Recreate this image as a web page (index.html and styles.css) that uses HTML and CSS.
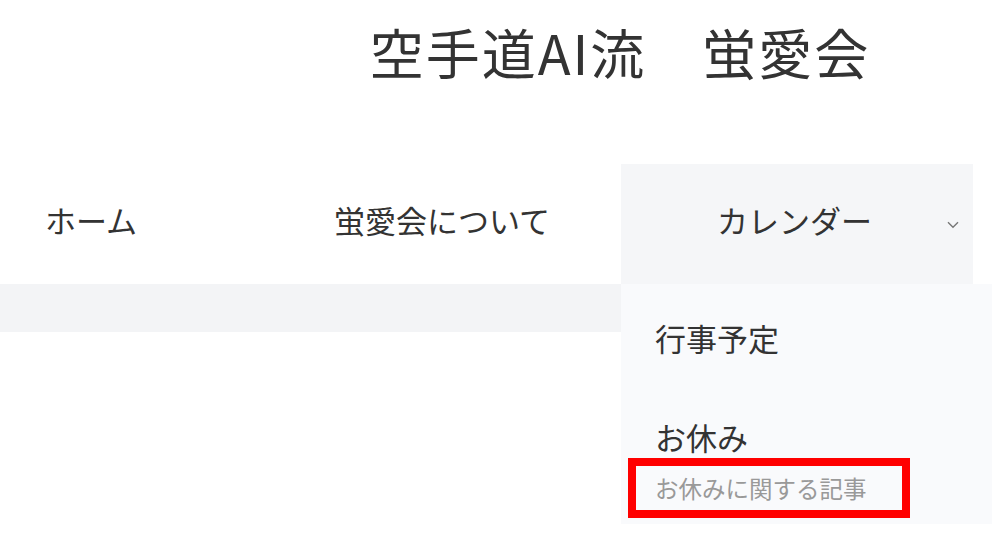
FILE: index.html
```html
<!DOCTYPE html>
<html lang="ja">
<head>
<meta charset="utf-8">
<title>空手道AI流　蛍愛会</title>
<link rel="stylesheet" href="styles.css">
</head>
<body>
<header class="site-header">
  <h1 class="site-title">空手道AI流　蛍愛会</h1>
</header>
<nav class="main-nav">
  <a class="nav-item nav-home" href="#">ホーム</a>
  <a class="nav-item nav-about" href="#">蛍愛会について</a>
  <div class="nav-item nav-calendar">
    <span class="nav-label">カレンダー</span>
    <svg class="chevron" width="12" height="8" viewBox="0 0 12 8"><polyline points="1,1.2 6,6.2 11,1.2" fill="none" stroke="#777" stroke-width="1.4"/></svg>
    <div class="dropdown">
      <a class="dropdown-item item-events" href="#">行事予定</a>
      <a class="dropdown-item item-holiday" href="#">お休み</a>
      <div class="highlight-box">
        <span class="dropdown-desc">お休みに関する記事</span>
      </div>
    </div>
  </div>
</nav>
<div class="nav-band"></div>
</body>
</html>
```
FILE: styles.css
```css
* { box-sizing: border-box; }
html, body { margin: 0; padding: 0; background: #fff; }
body {
  font-family: "Noto Sans CJK JP", "Noto Sans", sans-serif;
  color: #333;
  width: 992px;
  height: 542px;
  overflow: hidden;
}
a { color: inherit; text-decoration: none; }

.site-header {
  height: 164px;
  display: flex;
  justify-content: center;
  padding-left: 248px;
  padding-top: 12px;
}
.site-title {
  margin: 0;
  font-size: 54px;
  font-weight: 400;
  line-height: 80px;
  letter-spacing: 2px;
  color: #333;
}

.main-nav {
  display: flex;
  height: 120px;
  align-items: stretch;
}
.nav-item {
  display: flex;
  align-items: center;
  font-size: 31px;
  line-height: 44px;
}
.nav-home, .nav-about { padding-bottom: 8px; }
.nav-home { width: 290px; padding-left: 45px; }
.nav-about { width: 331px; padding-left: 44px; }
.nav-calendar {
  position: relative;
  width: 352px;
  background: #f5f6f8;
  padding-left: 21px;
  padding-right: 14px;
}
.nav-label { flex: 1; text-align: center; margin-bottom: 8px; }
.chevron { display: block; margin-top: 2px; }

.nav-band {
  height: 48px;
  background: #f3f4f6;
}

.dropdown {
  position: absolute;
  top: 100%;
  left: 0;
  width: 371px;
  height: 240px;
  background: #f9fafc;
  padding: 32px 0 0 7px;
  display: flex;
  flex-direction: column;
  align-items: flex-start;
  z-index: 2;
}
.dropdown-item {
  font-size: 31px;
  padding-left: 27px;
}
.item-events { line-height: 44px; }
.item-holiday { line-height: 36px; margin-top: 59px; }
.highlight-box {
  width: 282px;
  height: 60px;
  border: 8px solid #ff0000;
  padding-left: 19px;
  display: flex;
  align-items: center;
  margin-top: 3px;
}
.dropdown-desc {
  font-size: 23.5px;
  color: #999;
  line-height: 30px;
}
```
